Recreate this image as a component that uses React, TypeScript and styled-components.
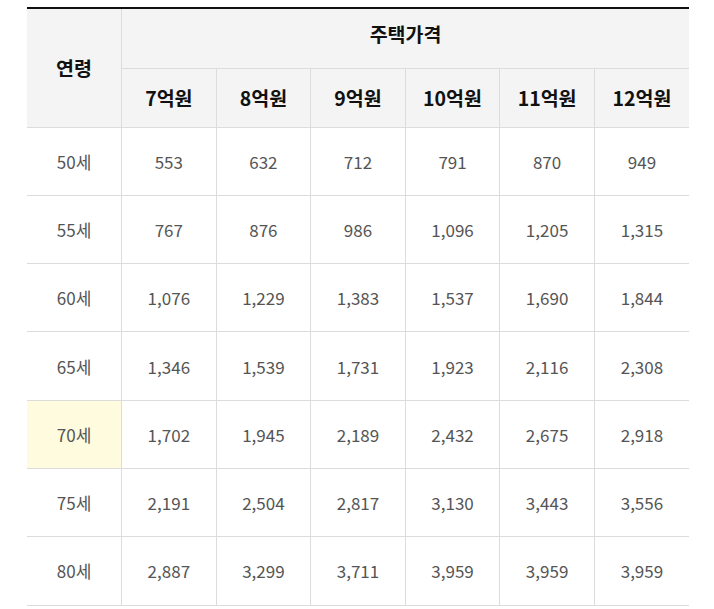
import React from 'react'
import styled, { createGlobalStyle } from 'styled-components'

const prices = ['7억원', '8억원', '9억원', '10억원', '11억원', '12억원']

const rows: { age: string; values: string[]; highlight?: boolean }[] = [
    { age: '50세', values: ['553', '632', '712', '791', '870', '949'] },
    { age: '55세', values: ['767', '876', '986', '1,096', '1,205', '1,315'] },
    { age: '60세', values: ['1,076', '1,229', '1,383', '1,537', '1,690', '1,844'] },
    { age: '65세', values: ['1,346', '1,539', '1,731', '1,923', '2,116', '2,308'] },
    { age: '70세', values: ['1,702', '1,945', '2,189', '2,432', '2,675', '2,918'], highlight: true },
    { age: '75세', values: ['2,191', '2,504', '2,817', '3,130', '3,443', '3,556'] },
    { age: '80세', values: ['2,887', '3,299', '3,711', '3,959', '3,959', '3,959'] },
]

const GlobalStyle = createGlobalStyle`
    body {
        margin: 0;
        background: #ffffff;
        font-family: "Noto Sans CJK KR", "Noto Sans", sans-serif;
    }
`

export default function App() {
    return (
        <>
            <GlobalStyle />
            <Wrapper>
                <Table>
                    <colgroup>
                        {Array.from({ length: 7 }).map((_, i) => (
                            <col key={i} style={{ width: `${100 / 7}%` }} />
                        ))}
                    </colgroup>
                    <thead>
                        <TopRow>
                            <HeadCell rowSpan={2} $first>연령</HeadCell>
                            <HeadCell colSpan={6} $group>주택가격</HeadCell>
                        </TopRow>
                        <SubRow>
                            {prices.map((p) => (
                                <HeadCell key={p}>{p}</HeadCell>
                            ))}
                        </SubRow>
                    </thead>
                    <tbody>
                        {rows.map((r) => (
                            <BodyRow key={r.age}>
                                <AgeCell $highlight={r.highlight}>{r.age}</AgeCell>
                                {r.values.map((v, i) => (
                                    <Cell key={i}>{v}</Cell>
                                ))}
                            </BodyRow>
                        ))}
                    </tbody>
                </Table>
            </Wrapper>
        </>
    )
}

const Wrapper = styled.div`
    padding: 7px 0 0 27px;
`

const Table = styled.table`
    width: 662px;
    table-layout: fixed;
    border-collapse: collapse;
    border-top: 2px solid #111;
`

const TopRow = styled.tr`
    height: 60px;
`

const SubRow = styled.tr`
    height: 59px;
`

const BodyRow = styled.tr`
    height: 68.3px;
`

const HeadCell = styled.th<{ $first?: boolean; $group?: boolean }>`
    background: #f4f4f4;
    color: #111;
    font-size: 19.5px;
    font-weight: 700;
    text-align: center;
    vertical-align: middle;
    padding: ${(p) => (p.$group ? '0 0 10px' : '0')};
    border-bottom: 1px solid #dcdcdc;
    border-left: ${(p) => (p.$first ? 'none' : '1px solid #dcdcdc')};
`

const Cell = styled.td`
    color: #555;
    font-size: 17px;
    text-align: center;
    vertical-align: middle;
    padding: 0;
    border-bottom: 1px solid #dcdcdc;
    border-left: 1px solid #dcdcdc;
`

const AgeCell = styled(Cell)<{ $highlight?: boolean }>`
    border-left: none;
    background: ${(p) => (p.$highlight ? '#fffbdf' : 'transparent')};
`
